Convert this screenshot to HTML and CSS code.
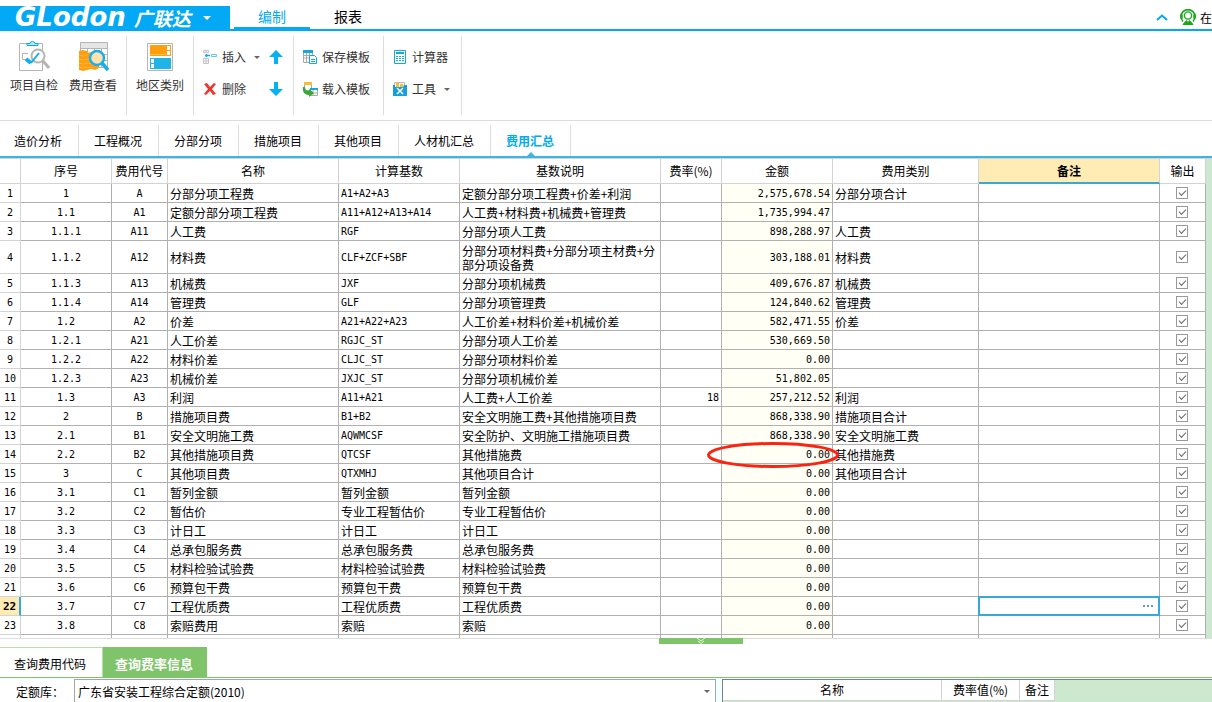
FILE: index.html
```html
<!DOCTYPE html>
<html lang="zh-CN">
<head>
<meta charset="utf-8">
<title>广联达 - 费用汇总</title>
<link rel="stylesheet" href="styles.css">
</head>
<body>
<header class="topbar">
  <button class="brand" type="button"><span class="brand-en">GLodon</span><span class="brand-cn">广联达</span><svg class="brand-arrow" width="8" height="4" viewBox="0 0 8 4"><path d="M0 0h8L4 4z" fill="#fff"/></svg></button>
  <nav class="main-tabs">
    <a class="main-tab active" href="#edit">编制</a>
    <a class="main-tab" href="#report">报表</a>
  </nav>
  <div class="top-right">
    <button class="plain" type="button" aria-label="收起"><svg width="12" height="7" viewBox="0 0 12 7"><path d="M1 6l5-4.500 5 4.500" fill="none" stroke="#03a9f4" stroke-width="2"/></svg></button>
    <button class="plain service" type="button"><svg width="16" height="17" viewBox="0 0 16 17" fill="none" stroke="#18a818"><path d="M3 12.500A7 7 0 1 1 13 12.500" stroke-width="1.600"/><circle cx="8" cy="6.500" r="3.600" stroke-width="1.400"/><path d="M1.500 5.500v4M14.500 5.500v4" stroke-width="2.500"/><path d="M3 15.500l3.500-4 1.500 2.500 1.500-2.500 3.500 4z" fill="#18a818"/></svg><span>在</span></button>
  </div>
</header>

<section class="ribbon">
  <div class="group group-check">
    <button class="big" type="button"><svg width="32" height="32" viewBox="0 0 32 32"><path d="M1.500 3.500h23v27h-23z" fill="#fff" stroke="#b5b5b5"/><path d="M9 5.500V3.500h3a2.500 2 0 0 1 5 0h3v2z" fill="#bfe9fb" stroke="#03a9f4"/><path d="M10 13.500H4.500v6H9" fill="none" stroke="#b5b5b5"/><circle cx="20" cy="16" r="6.500" fill="#fff" stroke="#b5b5b5" stroke-width="2"/><path d="M25 21l6 7" stroke="#b5b5b5" stroke-width="3"/><path d="M8 19l5 4" fill="none" stroke="#12aeea" stroke-width="4"/><path d="M13 23l8-10" fill="none" stroke="#12aeea" stroke-width="2"/></svg>项目自检</button>
    <button class="big" type="button"><svg width="32" height="32" viewBox="0 0 32 32"><path d="M3.500 2.500h27v25h-27z" fill="#fff" stroke="#b5b5b5"/><path d="M4 3h26v5H4z" fill="#e6e6e6"/><path d="M3 8.500h28M3 14.500h28M3 20.500h28M10.500 9v18M17.500 9v18M24.500 9v18" stroke="#b5b5b5"/><path d="M2 11l4-1 4 1v2l5-1 5 1 2 3v12l-4 2-4-1-4 1-4 1-4-1z" fill="#ff9f10"/><path d="M2 15l4 1 4-1M2 19l4 1 8-1M2 23l4 1 4-1 6 1 4-1M2 27l4 1 4-1 6 1" fill="none" stroke="#ffb63a"/><circle cx="20" cy="18" r="7" fill="#ffe1ad" stroke="#16b0ed" stroke-width="2.500"/><path d="M25 23l6 7" stroke="#16b0ed" stroke-width="3.500"/></svg>费用查看</button>
  </div>
  <div class="group group-region">
    <button class="big" type="button"><svg width="32" height="32" viewBox="0 0 32 32"><path d="M3.500 3.500h25v27h-25z" fill="#fff" stroke="#b5b5b5"/><path d="M6 5h21v11H6z" fill="#ff9f10"/><path d="M22.500 5.500h4v5h-4zM22.500 10.500h4v5h-4z" fill="#fff" stroke="#ff9f10"/><path d="M6 14.500h16" stroke="#ffc04e"/><path d="M6 18h21v11H6z" fill="#20b4e6"/><path d="M6.500 18.500h4v5h-4zM6.500 23.500h4v5h-4z" fill="#fff" stroke="#20b4e6"/></svg>地区类别</button>
  </div>
  <div class="group group-edit">
    <div class="stack">
      <button class="small" type="button"><svg width="16" height="16" viewBox="0 0 16 16" fill="none"><path d="M1.500 1.500h5v2h-5zM1.500 9.500h5v5h-5zM4 1v3M4 9v6M1 12h6" stroke="#c4c4c4"/><path d="M9.500 5.500h5v2h-5z" stroke="#62c8ec"/><path d="M3 6.500h5M4.500 5v3" stroke="#12aeea" stroke-width="1.500"/></svg>插入<svg class="caret" width="6" height="3" viewBox="0 0 6 3"><path d="M0 0h6L3 3z" fill="#666"/></svg></button>
      <button class="small" type="button"><svg width="16" height="16" viewBox="0 0 16 16"><path d="M2 3l3-1 3 4 4-4 2 1-4 5 4 5-3 1-3-4-4 4-2-1 4-5z" fill="#e8392f"/></svg>删除</button>
    </div>
    <div class="stack">
      <button class="plain move" type="button" aria-label="上移"><svg width="14" height="16" viewBox="0 0 14 16"><path d="M7 1l7 7H9v7H5V8H0z" fill="#05b0f3"/></svg></button>
      <button class="plain move" type="button" aria-label="下移"><svg width="14" height="16" viewBox="0 0 14 16"><path d="M7 15l7-7H9V1H5v7H0z" fill="#05b0f3"/></svg></button>
    </div>
  </div>
  <div class="group group-template">
    <div class="stack">
      <button class="small" type="button"><svg width="16" height="16" viewBox="0 0 16 16"><path d="M1.500 1.500h9v12h-9zM1 9h9M4.500 4v9M7.500 4v9M1 6.500h9" fill="#fff" stroke="#aaa"/><path d="M1 1h10v3H1z" fill="#14a8de"/><path d="M7.500 6.500h5l2 2v6h-7z" fill="#fff" stroke="#14a8de"/><path d="M9 10.500h4M9 12.500h4" stroke="#14a8de"/></svg>保存模板</button>
      <button class="small" type="button"><svg width="16" height="16" viewBox="0 0 16 16"><path d="M2.500 1.500h7v8h-7z" fill="#fff" stroke="#aaa"/><path d="M2 1h8v3H2z" fill="#f6bd31"/><path d="M8.500 7.500h7v7h-7zM11 9v6M8 12h8" fill="#fff" stroke="#aaa"/><path d="M8 7h8v2H8z" fill="#14a8de"/><path d="M1 6c-1 5 2 8 6 8v2l5-4-5-4v2C4 10 3 8 3 6z" fill="#38a936"/></svg>载入模板</button>
    </div>
  </div>
  <div class="group group-tools">
    <div class="stack">
      <button class="small" type="button"><svg width="16" height="16" viewBox="0 0 16 16"><path d="M2.500 1.500h11v13h-11z" fill="#fff" stroke="#14a8de"/><path d="M4 3h8v2H4z" fill="#14a8de"/><path d="M4 7.500h8M4 9.500h8M4 11.500h8" stroke="#14a8de" stroke-dasharray="2 1"/></svg>计算器</button>
      <button class="small" type="button"><svg width="16" height="16" viewBox="0 0 16 16"><path d="M2.500 1.500h10v8h-10z" fill="#fff" stroke="#bbb"/><path d="M4 2h3v4H4zM8 3h3v3H8z" fill="#f6bd31"/><path d="M1 4h2v2h8l1-2h3v11H1z" fill="#169fda"/><path d="M5 7l6 6M11 7l-6 6" stroke="#fff" stroke-width="1.500"/></svg>工具<svg class="caret" width="6" height="3" viewBox="0 0 6 3"><path d="M0 0h6L3 3z" fill="#666"/></svg></button>
    </div>
  </div>
</section>

<nav class="sub-tabs">
  <a class="sub-tab" href="#t1">造价分析</a>
  <a class="sub-tab" href="#t2">工程概况</a>
  <a class="sub-tab" href="#t3">分部分项</a>
  <a class="sub-tab" href="#t4">措施项目</a>
  <a class="sub-tab" href="#t5">其他项目</a>
  <a class="sub-tab" href="#t6">人材机汇总</a>
  <a class="sub-tab active" href="#t7">费用汇总</a>
</nav>

<main class="grid-wrap">
<table class="grid">
<colgroup><col class="c-idx"><col class="c-no"><col class="c-code"><col class="c-name"><col class="c-base"><col class="c-desc"><col class="c-rate"><col class="c-amt"><col class="c-type"><col class="c-note"><col class="c-out"><col></colgroup>
<thead>
<tr><th></th><th>序号</th><th>费用代号</th><th>名称</th><th>计算基数</th><th>基数说明</th><th>费率(%)</th><th>金额</th><th>费用类别</th><th class="current">备注</th><th>输出</th><td class="fill"></td></tr>
</thead>
<tbody>
<tr><th>1</th><td class="key">1</td><td class="key">A</td><td>分部分项工程费</td><td class="mono">A1+A2+A3</td><td>定额分部分项工程费+价差+利润</td><td></td><td class="amt">2,575,678.54</td><td>分部分项合计</td><td></td><td class="out"><input type="checkbox" aria-label="输出 1" checked></td><td class="fill"></td></tr>
<tr><th>2</th><td class="key">1.1</td><td class="key">A1</td><td>定额分部分项工程费</td><td class="mono">A11+A12+A13+A14</td><td>人工费+材料费+机械费+管理费</td><td></td><td class="amt">1,735,994.47</td><td></td><td></td><td class="out"><input type="checkbox" aria-label="输出 2" checked></td><td class="fill"></td></tr>
<tr><th>3</th><td class="key">1.1.1</td><td class="key">A11</td><td>人工费</td><td class="mono">RGF</td><td>分部分项人工费</td><td></td><td class="amt">898,288.97</td><td>人工费</td><td></td><td class="out"><input type="checkbox" aria-label="输出 3" checked></td><td class="fill"></td></tr>
<tr class="tall"><th>4</th><td class="key">1.1.2</td><td class="key">A12</td><td>材料费</td><td class="mono">CLF+ZCF+SBF</td><td>分部分项材料费+分部分项主材费+分部分项设备费</td><td></td><td class="amt">303,188.01</td><td>材料费</td><td></td><td class="out"><input type="checkbox" aria-label="输出 4" checked></td><td class="fill"></td></tr>
<tr><th>5</th><td class="key">1.1.3</td><td class="key">A13</td><td>机械费</td><td class="mono">JXF</td><td>分部分项机械费</td><td></td><td class="amt">409,676.87</td><td>机械费</td><td></td><td class="out"><input type="checkbox" aria-label="输出 5" checked></td><td class="fill"></td></tr>
<tr><th>6</th><td class="key">1.1.4</td><td class="key">A14</td><td>管理费</td><td class="mono">GLF</td><td>分部分项管理费</td><td></td><td class="amt">124,840.62</td><td>管理费</td><td></td><td class="out"><input type="checkbox" aria-label="输出 6" checked></td><td class="fill"></td></tr>
<tr><th>7</th><td class="key">1.2</td><td class="key">A2</td><td>价差</td><td class="mono">A21+A22+A23</td><td>人工价差+材料价差+机械价差</td><td></td><td class="amt">582,471.55</td><td>价差</td><td></td><td class="out"><input type="checkbox" aria-label="输出 7" checked></td><td class="fill"></td></tr>
<tr><th>8</th><td class="key">1.2.1</td><td class="key">A21</td><td>人工价差</td><td class="mono">RGJC_ST</td><td>分部分项人工价差</td><td></td><td class="amt">530,669.50</td><td></td><td></td><td class="out"><input type="checkbox" aria-label="输出 8" checked></td><td class="fill"></td></tr>
<tr><th>9</th><td class="key">1.2.2</td><td class="key">A22</td><td>材料价差</td><td class="mono">CLJC_ST</td><td>分部分项材料价差</td><td></td><td class="amt">0.00</td><td></td><td></td><td class="out"><input type="checkbox" aria-label="输出 9" checked></td><td class="fill"></td></tr>
<tr><th>10</th><td class="key">1.2.3</td><td class="key">A23</td><td>机械价差</td><td class="mono">JXJC_ST</td><td>分部分项机械价差</td><td></td><td class="amt">51,802.05</td><td></td><td></td><td class="out"><input type="checkbox" aria-label="输出 10" checked></td><td class="fill"></td></tr>
<tr><th>11</th><td class="key">1.3</td><td class="key">A3</td><td>利润</td><td class="mono">A11+A21</td><td>人工费+人工价差</td><td class="rate">18</td><td class="amt">257,212.52</td><td>利润</td><td></td><td class="out"><input type="checkbox" aria-label="输出 11" checked></td><td class="fill"></td></tr>
<tr><th>12</th><td class="key">2</td><td class="key">B</td><td>措施项目费</td><td class="mono">B1+B2</td><td>安全文明施工费+其他措施项目费</td><td></td><td class="amt">868,338.90</td><td>措施项目合计</td><td></td><td class="out"><input type="checkbox" aria-label="输出 12" checked></td><td class="fill"></td></tr>
<tr><th>13</th><td class="key">2.1</td><td class="key">B1</td><td>安全文明施工费</td><td class="mono">AQWMCSF</td><td>安全防护、文明施工措施项目费</td><td></td><td class="amt">868,338.90</td><td>安全文明施工费</td><td></td><td class="out"><input type="checkbox" aria-label="输出 13" checked></td><td class="fill"></td></tr>
<tr><th>14</th><td class="key">2.2</td><td class="key">B2</td><td>其他措施项目费</td><td class="mono">QTCSF</td><td>其他措施费</td><td></td><td class="amt marked">0.00<svg class="ring" width="132" height="26" viewBox="0 0 132 26"><ellipse cx="66" cy="13" rx="64.500" ry="11.500" fill="none" stroke="#fb2412" stroke-width="3"/></svg></td><td>其他措施费</td><td></td><td class="out"><input type="checkbox" aria-label="输出 14" checked></td><td class="fill"></td></tr>
<tr><th>15</th><td class="key">3</td><td class="key">C</td><td>其他项目费</td><td class="mono">QTXMHJ</td><td>其他项目合计</td><td></td><td class="amt">0.00</td><td>其他项目合计</td><td></td><td class="out"><input type="checkbox" aria-label="输出 15" checked></td><td class="fill"></td></tr>
<tr><th>16</th><td class="key">3.1</td><td class="key">C1</td><td>暂列金额</td><td>暂列金额</td><td>暂列金额</td><td></td><td class="amt">0.00</td><td></td><td></td><td class="out"><input type="checkbox" aria-label="输出 16" checked></td><td class="fill"></td></tr>
<tr><th>17</th><td class="key">3.2</td><td class="key">C2</td><td>暂估价</td><td>专业工程暂估价</td><td>专业工程暂估价</td><td></td><td class="amt">0.00</td><td></td><td></td><td class="out"><input type="checkbox" aria-label="输出 17" checked></td><td class="fill"></td></tr>
<tr><th>18</th><td class="key">3.3</td><td class="key">C3</td><td>计日工</td><td>计日工</td><td>计日工</td><td></td><td class="amt">0.00</td><td></td><td></td><td class="out"><input type="checkbox" aria-label="输出 18" checked></td><td class="fill"></td></tr>
<tr><th>19</th><td class="key">3.4</td><td class="key">C4</td><td>总承包服务费</td><td>总承包服务费</td><td>总承包服务费</td><td></td><td class="amt">0.00</td><td></td><td></td><td class="out"><input type="checkbox" aria-label="输出 19" checked></td><td class="fill"></td></tr>
<tr><th>20</th><td class="key">3.5</td><td class="key">C5</td><td>材料检验试验费</td><td>材料检验试验费</td><td>材料检验试验费</td><td></td><td class="amt">0.00</td><td></td><td></td><td class="out"><input type="checkbox" aria-label="输出 20" checked></td><td class="fill"></td></tr>
<tr><th>21</th><td class="key">3.6</td><td class="key">C6</td><td>预算包干费</td><td>预算包干费</td><td>预算包干费</td><td></td><td class="amt">0.00</td><td></td><td></td><td class="out"><input type="checkbox" aria-label="输出 21" checked></td><td class="fill"></td></tr>
<tr><th class="current">22</th><td class="key">3.7</td><td class="key">C7</td><td>工程优质费</td><td>工程优质费</td><td>工程优质费</td><td></td><td class="amt">0.00</td><td></td><td class="selected"><button class="cell-editor" type="button" aria-label="编辑备注"><svg width="10" height="2" viewBox="0 0 10 2"><path d="M0 0h2v2H0zM4 0h2v2H4zM8 0h2v2H8z" fill="#5b9cc8"/></svg></button></td><td class="out"><input type="checkbox" aria-label="输出 22" checked></td><td class="fill"></td></tr>
<tr><th>23</th><td class="key">3.8</td><td class="key">C8</td><td>索赔费用</td><td>索赔</td><td>索赔</td><td></td><td class="amt">0.00</td><td></td><td></td><td class="out"><input type="checkbox" aria-label="输出 23" checked></td><td class="fill"></td></tr>
<tr><th></th><td></td><td></td><td></td><td></td><td></td><td></td><td class="amt"></td><td></td><td></td><td></td><td class="fill"></td></tr>
</tbody>
</table>
</main>

<section class="bottom">
  <button class="grip" type="button" aria-label="收起面板"><svg width="8" height="6" viewBox="0 0 8 6"><path d="M0 0l4 3 4-3M1 3l3 2.500L7 3" fill="none" stroke="#e3f6dc"/></svg></button>
  <nav class="query-tabs">
    <a class="query-tab" href="#code">查询费用代码</a>
    <a class="query-tab active" href="#rate">查询费率信息</a>
  </nav>
  <div class="panes">
    <div class="pane-left">
      <label for="lib">定额库：</label>
      <div class="combo">
        <select id="lib"><option>广东省安装工程综合定额(2010)</option></select>
        <svg width="6" height="3" viewBox="0 0 6 3"><path d="M0 0h6L3 3z" fill="#666"/></svg>
      </div>
    </div>
    <div class="pane-right">
      <table class="rates">
        <colgroup><col class="r-name"><col class="r-value"><col class="r-note"></colgroup>
        <tr><th>名称</th><th>费率值(%)</th><th>备注</th></tr>
      </table>
    </div>
  </div>
</section>
</body>
</html>
```
FILE: styles.css
```css
* { box-sizing: border-box; }

body {
  margin: 0;
  height: 100vh;
  overflow: hidden;
  display: flex;
  flex-direction: column;
  background: #fff;
  color: #000;
  font: 12px/14px "Noto Sans CJK SC", sans-serif;
}

a { color: inherit; text-decoration: none; }
button, select { font: inherit; color: inherit; }
button { margin: 0; padding: 0; border: 0; background: none; }
svg { display: block; flex: none; }

/* Title bar */
.topbar {
  flex: none;
  display: flex;
  height: 31px;
  padding-top: 6px;
  border-bottom: 2px solid #03a9f4;
}
.brand {
  display: flex;
  align-items: center;
  width: 230px;
  padding-left: 15px;
  background: #03a9f4;
  color: #fff;
}
.brand-en { font: italic bold 26px/23px "DejaVu Sans", sans-serif; }
.brand-cn { margin-left: 8px; font-size: 19px; line-height: 23px; font-weight: bold; font-style: italic; }
.brand-arrow { margin-left: 12px; }
.main-tabs { display: flex; padding-left: 4px; }
.main-tab {
  width: 76px;
  text-align: center;
  font-size: 14px;
  line-height: 21px;
}
.main-tab.active { color: #03a9f4; border-bottom: 2px solid #03a9f4; }
.top-right {
  display: flex;
  align-items: center;
  gap: 12px;
  margin-left: auto;
}
.service { display: flex; align-items: center; gap: 4px; }

/* Ribbon */
.ribbon {
  flex: none;
  display: flex;
  height: 90px;
  padding: 5px 0;
  border-bottom: 1px solid #ddd;
  color: #333;
}
.group { display: flex; border-right: 1px solid #ddd; }
.group-check { gap: 11px; padding: 0 9px 0 10px; }
.group-region { padding: 0 9px; }
.group-edit { gap: 9px; padding: 0 10px 0 8px; }
.group-template { padding: 0 13px 0 8px; }
.group-tools { padding: 0 11px 0 8px; }
.big {
  display: flex;
  flex-direction: column;
  align-items: center;
  gap: 6px;
  height: 62px;
  padding-top: 4px;
}
.stack { display: flex; flex-direction: column; gap: 16px; padding-top: 13px; }
.small { display: flex; align-items: center; gap: 4px; height: 16px; }
.caret { margin-left: 4px; }

/* Module tabs */
.sub-tabs {
  flex: none;
  display: flex;
  height: 37px;
  padding-top: 4px;
  border-bottom: 2px solid #3fb4e3;
}
.sub-tab {
  position: relative;
  padding: 0 16px 0 15px;
  border-right: 1px solid #ddd;
  line-height: 32px;
}
.sub-tab:first-child { padding-left: 14px; }
.sub-tab.active { color: #03a9f4; font-weight: bold; }
.sub-tab.active::after {
  content: "";
  position: absolute;
  left: 50%;
  bottom: 0;
  margin-left: -4px;
  border: 4px solid transparent;
  border-top: 0;
  border-bottom-color: #3fb4e3;
}

/* Fee grid */
.grid-wrap {
  flex: 1;
  min-height: 0;
  overflow: hidden;
  border-top: 1px solid #d3d3d3;
  border-bottom: 1px solid #ddd;
}
.grid, .rates { border-collapse: separate; border-spacing: 0; table-layout: fixed; }
.grid { width: 100%; }
.c-idx { width: 21px; }
.c-no { width: 91px; }
.c-code { width: 56px; }
.c-name { width: 171px; }
.c-base { width: 121px; }
.c-desc { width: 201px; }
.c-rate { width: 61px; }
.c-amt { width: 111px; }
.c-type { width: 146px; }
.c-note { width: 181px; }
.c-out { width: 46px; }

.grid th, .grid td { padding: 0 2px; border: 0 solid #b0b0b0; border-width: 0 1px 1px 0; }
.grid th { padding: 0; border-color: #d3d3d3; font-weight: normal; text-align: center; }
.grid thead tr { height: 25px; }
.grid tbody tr { height: 19px; }
.grid tbody .tall { height: 33px; }
.grid tbody th, .grid tbody td { padding-top: 2px; }
.grid thead .current { background: #ffecb5; font-weight: bold; border-bottom: 2px solid #36a9d6; }
.grid tbody th, .mono, .key, .amt, .rate { font-family: "DejaVu Sans Mono", monospace; font-size: 10px; }
.grid tbody th.current {
  background: #ffecb5;
  border-right: 2px solid #36a9d6;
  font-weight: bold;
  font-size: 11px;
}
.key { text-align: center; }
.rate { text-align: right; }
.grid .amt { text-align: right; background: #fffff5; }
.grid .fill { border: 0; background: #cce8cf; }

.marked { position: relative; }
.ring { position: absolute; z-index: 1; left: -15px; top: -3px; }

.selected { position: relative; }
.cell-editor {
  position: absolute;
  inset: -1px;
  display: flex;
  align-items: center;
  justify-content: flex-end;
  padding-right: 5px;
  border: 2px solid #36a9d6;
  background: #fff;
}

.grid tbody .out { padding: 0 3px 0 2px; }
.out input {
  appearance: none;
  position: relative;
  display: block;
  width: 12px;
  height: 12px;
  margin: 0 auto;
  border: 1px solid #999;
  background: #fff;
}
.out input:checked::before {
  content: "";
  position: absolute;
  left: 2px;
  top: 2px;
  width: 6px;
  height: 3px;
  border: solid #667;
  border-width: 0 0 1px 1px;
  transform: rotate(-45deg);
}

/* Query panel */
.bottom {
  position: relative;
  flex: none;
  height: 63px;
  padding-top: 8px;
}
.grip {
  position: absolute;
  left: 659px;
  top: -1px;
  width: 84px;
  height: 6px;
  display: flex;
  justify-content: center;
  background: #7fc46a;
}
.query-tabs { display: flex; height: 31px; border-bottom: 1px solid #7fc46a; }
.query-tab {
  padding: 0 16px 0 14px;
  border-top: 1px solid #b5e3a2;
  border-right: 1px solid #b5e3a2;
  line-height: 32px;
}
.query-tab.active {
  padding: 0 13px 0 12px;
  background: #7fc46a;
  border-color: #7fc46a;
  color: #fff;
  font-size: 13px;
  font-weight: bold;
}
.panes { display: flex; gap: 6px; height: 26px; padding-top: 1px; background: #f2ffff; }
.pane-left { display: flex; flex: 716; background: #fff; }
.pane-left label { width: 74px; padding-left: 16px; line-height: 26px; }
.combo {
  flex: 1;
  display: flex;
  align-items: center;
  padding-right: 5px;
  border: 1px solid #a5a5a5;
}
.combo select {
  flex: 1;
  height: 23px;
  padding: 0 0 0 3px;
  border: 0;
  outline: 0;
  appearance: none;
  background: #fff;
}
.pane-right {
  flex: 489;
  border-top: 1px solid #7c8280;
  border-left: 1px solid #7c8280;
  background: #cce8cf;
}
.r-name { width: 219px; }
.r-value { width: 78px; }
.r-note { width: 35px; }
.rates { width: 332px; }
.rates th {
  height: 21px;
  padding: 0;
  background: #fff;
  border: 0 solid #d3d3d3;
  border-width: 0 1px 1px 0;
  font-weight: normal;
}
```
